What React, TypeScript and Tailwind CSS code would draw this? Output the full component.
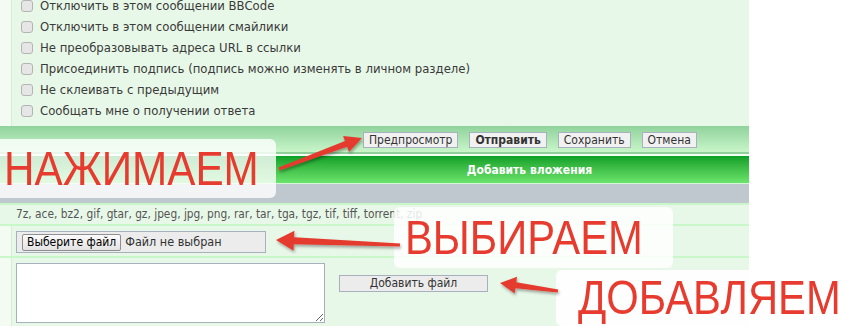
import React from 'react';

const ui = { fontFamily: "'DejaVu Sans Condensed', 'Liberation Sans', sans-serif" };
const big = { fontFamily: "'Liberation Sans', Arial, sans-serif" };

const options = [
  'Отключить в этом сообщении BBCode',
  'Отключить в этом сообщении смайлики',
  'Не преобразовывать адреса URL в ссылки',
  'Присоединить подпись (подпись можно изменять в личном разделе)',
  'Не склеивать с предыдущим',
  'Сообщать мне о получении ответа',
];

function arrow(x1: number, y1: number, x2: number, y2: number, tail: number, neck: number, headLen: number, headW: number) {
  const dx = x2 - x1;
  const dy = y2 - y1;
  const len = Math.hypot(dx, dy);
  const ux = dx / len;
  const uy = dy / len;
  const nx = -uy;
  const ny = ux;
  const bx = x2 - ux * headLen;
  const by = y2 - uy * headLen;
  const p = (x: number, y: number) => `${x.toFixed(1)},${y.toFixed(1)}`;
  return [
    p(x1 + nx * tail / 2, y1 + ny * tail / 2),
    p(bx + nx * neck / 2, by + ny * neck / 2),
    p(bx + nx * headW / 2, by + ny * headW / 2),
    p(x2, y2),
    p(bx - nx * headW / 2, by - ny * headW / 2),
    p(bx - nx * neck / 2, by - ny * neck / 2),
    p(x1 - nx * tail / 2, y1 - ny * tail / 2),
  ].join(' ');
}

function Btn({ children, bold }: { children: React.ReactNode; bold?: boolean }) {
  return (
    <button
      className={`h-[16px] px-[5px] border border-[#a9b0bd] bg-[#f1f1f1] text-[12px] leading-[14px] text-[#333] ${bold ? 'font-bold' : ''}`}
      style={ui}
    >
      {children}
    </button>
  );
}

function Row({ children, className = '' }: { children: React.ReactNode; className?: string }) {
  return (
    <div className={`flex border-b-2 border-[#c9f7c9] ${className}`}>
      <div className="w-[12px] shrink-0 bg-[#f3fbf3] border-r border-[#d3efd3]" />
      <div className="flex-1 px-[4px]">{children}</div>
    </div>
  );
}

export default function App() {
  return (
    <div className="relative w-[845px] h-[326px] overflow-hidden bg-white" style={ui}>
      <div className="w-[749px] bg-[#e8f8e8]">
        <div className="flex">
          <div className="w-[12px] shrink-0 bg-[#f3fbf3] border-r border-[#d3efd3]" />
          <div className="flex-1 -mt-[5px] pb-[5px] pl-[9px]">
            {options.map((o) => (
              <div key={o} className="flex items-center h-[21px] gap-[7px]">
                <span className="w-[12px] h-[12px] rounded-[3px] border border-[#b4b4b4] bg-[#e6e6e6]" />
                <span className="text-[13px] text-[#3a3a3a]">{o}</span>
              </div>
            ))}
          </div>
        </div>

        <div className="h-[26px] bg-gradient-to-b from-[#8fd29c] to-[#c9f6c9] flex items-center gap-[11px] pl-[363px] pt-[2px]">
          <Btn>Предпросмотр</Btn>
          <Btn bold>Отправить</Btn>
          <Btn>Сохранить</Btn>
          <Btn>Отмена</Btn>
        </div>
        <div className="h-[2px] bg-[#8fd09b]" />
        <div className="h-[2px] bg-[#f4fff4]" />
        <div className="h-[27px] bg-gradient-to-b from-[#07a027] to-[#6ae46c] flex items-center justify-center pl-[310px]">
          <span className="text-[12px] font-bold text-white">Добавить вложения</span>
        </div>
        <div className="h-[1px] bg-[#d4f8d4]" />
        <div className="h-[19px] bg-[#c0c8cf]" />
        <div className="h-[2px] bg-[#c9f7c9]" />

        <Row className="h-[21px] items-center">
          <div className="h-full flex items-center text-[11.8px] text-[#555]">
            7z, ace, bz2, gif, gtar, gz, jpeg, jpg, png, rar, tar, tga, tgz, tif, tiff, torrent, zip
          </div>
        </Row>
        <Row className="h-[32px]">
          <div className="pt-[5px]">
            <div className="w-[250px] h-[22px] border border-[#a9b0bd] bg-[#ececec] flex items-center pl-[5px] gap-[4px]">
              <button className="h-[17px] px-[4px] border border-[#8f8f8f] rounded-[2px] bg-gradient-to-b from-[#fbfbfb] to-[#e3e3e3] text-[12px] leading-[15px] text-black">
                Выберите файл
              </button>
              <span className="text-[12.5px] text-[#333]">Файл не выбран</span>
            </div>
          </div>
        </Row>
        <div className="flex h-[70px]">
          <div className="w-[12px] shrink-0 bg-[#f3fbf3] border-r border-[#d3efd3]" />
          <div className="flex-1 flex pl-[4px] pt-[5px] gap-[14px]">
            <textarea className="w-[309px] h-[60px] border border-[#a9b0bd] bg-white resize-y" />
            <div className="pt-[7px]">
              <button className="w-[149px] h-[17px] border border-[#a9b0bd] bg-[#ececec] text-[12px] leading-[15px] text-[#333]">
                Добавить файл
              </button>
            </div>
          </div>
        </div>
      </div>

      <div className="absolute left-0 top-[139px] w-[276px] h-[59px] rounded-r-md bg-white/80 flex items-center pl-[4px]">
        <span className="text-[48px] leading-none text-[#e63b2e] origin-left scale-x-[0.88] inline-block whitespace-nowrap" style={big}>
          НАЖИМАЕМ
        </span>
      </div>
      <div className="absolute left-[394px] top-[207px] w-[279px] h-[61px] rounded-md bg-white/85 flex items-center pl-[11px]">
        <span className="text-[48px] leading-none text-[#e63b2e] origin-left scale-x-[0.87] inline-block whitespace-nowrap" style={big}>
          ВЫБИРАЕМ
        </span>
      </div>
      <div className="absolute left-[556px] top-[270px] w-[289px] h-[56px] rounded-l-md bg-white/90 flex items-center pl-[22px]">
        <span className="text-[48px] leading-none text-[#e63b2e] origin-left scale-x-[0.87] inline-block whitespace-nowrap" style={big}>
          ДОБАВЛЯЕМ
        </span>
      </div>

      <svg className="absolute inset-0 pointer-events-none" width="845" height="326">
        <defs>
          <filter id="sh" x="-20%" y="-50%" width="140%" height="200%">
            <feDropShadow dx="1" dy="2" stdDeviation="1.5" floodColor="#000" floodOpacity="0.35" />
          </filter>
        </defs>
        <g fill="#e53a2e" filter="url(#sh)">
          <polygon points={arrow(279, 169, 362, 138, 3, 6, 17, 17)} />
          <polygon points={arrow(400, 245, 276, 240, 3, 7, 18, 20)} />
          <polygon points={arrow(558, 291, 500, 283, 3, 6, 16, 17)} />
        </g>
      </svg>
    </div>
  );
}
